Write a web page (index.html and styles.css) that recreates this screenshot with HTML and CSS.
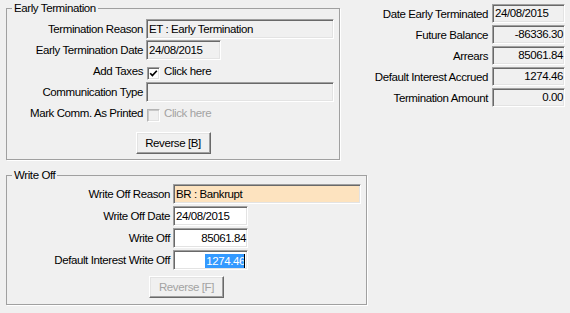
FILE: index.html
```html
<!DOCTYPE html>
<html>
<head>
<meta charset="utf-8">
<link rel="stylesheet" href="styles.css">
</head>
<body>
<div class="window">
  <div class="top">
    <fieldset class="group group-et">
      <legend>Early Termination</legend>
      <div class="form form-et">
        <span class="lbl">Termination Reason</span>
        <div class="box ro">ET : Early Termination</div>
        <span class="lbl">Early Termination Date</span>
        <div class="box ro date">24/08/2015</div>
        <span class="lbl">Add Taxes</span>
        <div class="check-row">
          <span class="chk"><svg width="9" height="9" viewBox="0 0 9 9"><polyline points="1.2,4.2 3.4,6.6 7.8,1.8" fill="none" stroke="#000" stroke-width="1.7"/></svg></span>
          <span>Click here</span>
        </div>
        <span class="lbl">Communication Type</span>
        <div class="box ro"></div>
        <span class="lbl">Mark Comm. As Printed</span>
        <div class="check-row disabled">
          <span class="chk chk-off"></span>
          <span>Click here</span>
        </div>
      </div>
      <div class="btn-row"><button class="btn">Reverse [B]</button></div>
    </fieldset>
    <div class="summary">
      <span class="lbl">Date Early Terminated</span>
      <div class="box ro sbox">24/08/2015</div>
      <span class="lbl">Future Balance</span>
      <div class="box ro sbox num">-86336.30</div>
      <span class="lbl">Arrears</span>
      <div class="box ro sbox num">85061.84</div>
      <span class="lbl">Default Interest Accrued</span>
      <div class="box ro sbox num">1274.46</div>
      <span class="lbl">Termination Amount</span>
      <div class="box ro sbox num">0.00</div>
    </div>
  </div>
  <fieldset class="group group-wo">
    <legend>Write Off</legend>
    <div class="form form-wo">
      <span class="lbl">Write Off Reason</span>
      <div class="box reason">BR : Bankrupt</div>
      <span class="lbl">Write Off Date</span>
      <div class="box date">24/08/2015</div>
      <span class="lbl">Write Off</span>
      <div class="box date num">85061.84</div>
      <span class="lbl">Default Interest Write Off</span>
      <div class="box date num"><span class="sel">1274.46</span><span class="caret"></span></div>
    </div>
    <div class="btn-row btn-row-wo"><button class="btn btn-off">Reverse [F]</button></div>
  </fieldset>
</div>
</body>
</html>
```

FILE: styles.css
```css
* { box-sizing: border-box; }
html, body { margin: 0; background: #f0f0f0; }
body {
  font-family: "Liberation Sans", Arial, sans-serif;
  font-size: 11.5px;
  letter-spacing: -0.4px;
  color: #000;
  width: 570px;
  height: 313px;
  overflow: hidden;
}
.window { padding: 2px 5px 0 6px; }
.top { display: flex; align-items: flex-start; }

.group {
  margin: 0;
  padding: 0;
  min-width: 0;
  border: 1px solid #a0a0a0;
  box-shadow: 1px 1px 0 #fff;
}
.group legend {
  margin-left: 5px;
  padding: 0 2px;
  line-height: 13px;
}
.group-et { width: 334px; padding: 4px 0 5px; }
.group-wo { width: 361px; margin-top: 9px; padding: 2px 0 6px; }

.form { display: grid; align-items: center; }
.form-et {
  grid-template-columns: 136px 188px;
  column-gap: 3px;
  grid-auto-rows: 20px;
  row-gap: 1px;
}
.form-wo {
  grid-template-columns: 163px 188px;
  column-gap: 3px;
  grid-auto-rows: 20px;
  row-gap: 2px;
}
.lbl { text-align: right; white-space: nowrap; }

.box {
  height: 20px;
  border: 1px solid;
  border-color: #a0a0a0 #fff #fff #a0a0a0;
  box-shadow: inset 1px 1px 0 #696969, inset -1px -1px 0 #e3e3e3;
  padding: 0 1px 0 2px;
  line-height: 18px;
  white-space: nowrap;
  overflow: hidden;
  background: #fff;
}
.box.ro { background: #f0f0f0; }
.box.reason { background: #fde3bf; }
.date { width: 75px; }
.num { text-align: right; }

.summary {
  margin-left: auto;
  margin-top: 2px;
  display: grid;
  grid-template-columns: auto 73px;
  column-gap: 4px;
  grid-auto-rows: 19px;
  row-gap: 2px;
  align-items: center;
}
.sbox { height: 19px; line-height: 17px; }

.check-row { display: flex; align-items: center; gap: 4px; }
.chk {
  width: 13px;
  height: 13px;
  margin-left: 1px;
  margin-top: 4px;
  border: 1px solid;
  border-color: #a0a0a0 #fff #fff #a0a0a0;
  box-shadow: inset 1px 1px 0 #696969, inset -1px -1px 0 #e3e3e3;
  background: #fff;
  display: flex;
  align-items: center;
  justify-content: center;
}
.chk-off {
  background: #f0f0f0;
  box-shadow: inset 1px 1px 0 #c8c8c8, inset -1px -1px 0 #e3e3e3;
  border-color: #b4b4b4 #fff #fff #b4b4b4;
}
.disabled { color: #a3a3a3; }

.btn-row { display: flex; justify-content: center; margin-top: 9px; }
.btn-row-wo { margin-top: 6px; }
.btn {
  width: 75px;
  height: 22px;
  padding: 0;
  font: inherit;
  letter-spacing: inherit;
  color: #000;
  background: #f0f0f0;
  border: 1px solid;
  border-color: #fff #696969 #696969 #fff;
  box-shadow: inset -1px -1px 0 #a0a0a0, inset 1px 1px 0 #e3e3e3;
}
.btn-off { color: #a3a3a3; }

.sel {
  display: inline-block;
  background: #3399ff;
  color: #fff;
  line-height: 14px;
  padding-left: 1px;
  vertical-align: middle;
}
.caret {
  display: inline-block;
  width: 1px;
  height: 14px;
  margin-left: -1px;
  margin-right: 1px;
  background: #000;
  vertical-align: middle;
}
```
